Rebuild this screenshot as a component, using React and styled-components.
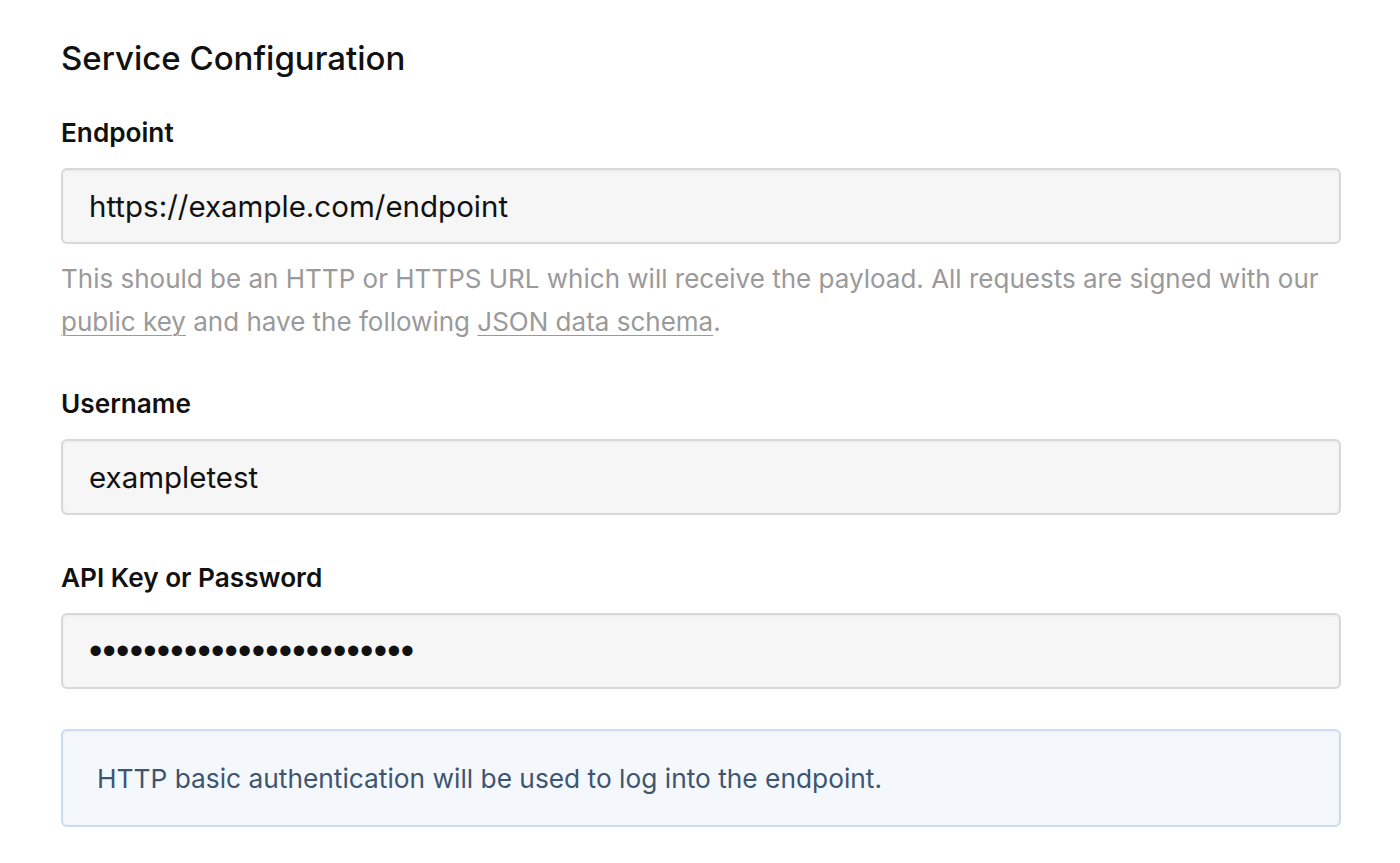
import React from "react";
import styled, { createGlobalStyle } from "styled-components";

const Global = createGlobalStyle`
  html, body { margin: 0; padding: 0; background: #fff; }
  body { font-family: Inter, "Liberation Sans", Arial, sans-serif; color: #111; }
`;

const Page = styled.main`
  padding: 34px 59px 0 61px;
`;

const Title = styled.h2`
  margin: 0;
  font-size: 33px;
  font-weight: 500;
  line-height: 48px;
  color: #111;
`;

const Form = styled.form`
  display: flex;
  flex-direction: column;
  margin-top: 36px;
`;

const Field = styled.div`
  display: flex;
  flex-direction: column;
  margin-bottom: ${(p) => p.$gap || 48}px;
`;

const Label = styled.label`
  font-size: 26.2px;
  font-weight: 600;
  line-height: 30px;
  color: #111;
  margin-bottom: 20px;
`;

const Input = styled.input`
  box-sizing: border-box;
  width: 100%;
  height: 76px;
  padding: 0 26px;
  border: 2px solid #d8d8d8;
  border-radius: 6px;
  background: #f6f6f6;
  box-shadow: inset 0 1px 3px rgba(0, 0, 0, 0.05);
  font-family: ${(p) =>
    p.$masked ? `"Liberation Sans", Arial, sans-serif` : `Inter, "Liberation Sans", Arial, sans-serif`};
  font-size: ${(p) => (p.$masked ? "38px" : "29.5px")};
  letter-spacing: ${(p) => (p.$masked ? "0.25px" : "0")};
  color: #111;
  outline: none;
`;

const Help = styled.p`
  margin: 13px 0 0;
  font-size: 26px;
  line-height: 43px;
  color: #9a9a9a;
`;

const HelpLink = styled.a`
  color: #9a9a9a;
  text-decoration: underline;
  text-decoration-thickness: 1px;
  text-underline-offset: 4px;
`;

const Notice = styled.div`
  box-sizing: border-box;
  display: flex;
  align-items: center;
  height: 98px;
  padding: 0 34px;
  border: 2px solid #c9dcf1;
  border-radius: 6px;
  background: #f4f8fd;
  box-shadow: inset 0 1px 4px rgba(0, 0, 0, 0.04);
  font-size: 26.3px;
  color: #3e5570;
`;

export default function App() {
  return (
    <>
      <Global />
      <Page>
        <Title>Service Configuration</Title>
        <Form onSubmit={(e) => e.preventDefault()}>
          <Field $gap={46}>
            <Label htmlFor="endpoint">Endpoint</Label>
            <Input id="endpoint" type="text" defaultValue="https://example.com/endpoint" />
            <Help>
              This should be an HTTP or HTTPS URL which will receive the payload. All requests are signed with our{" "}
              <HelpLink href="#">public key</HelpLink> and have the following{" "}
              <HelpLink href="#">JSON data schema</HelpLink>.
            </Help>
          </Field>
          <Field>
            <Label htmlFor="username">Username</Label>
            <Input id="username" type="text" defaultValue="exampletest" />
          </Field>
          <Field $gap={40}>
            <Label htmlFor="apikey">API Key or Password</Label>
            <Input id="apikey" type="password" $masked defaultValue="abcdefghijklmnopqrstuvwx" />
          </Field>
          <Notice>HTTP basic authentication will be used to log into the endpoint.</Notice>
        </Form>
      </Page>
    </>
  );
}
